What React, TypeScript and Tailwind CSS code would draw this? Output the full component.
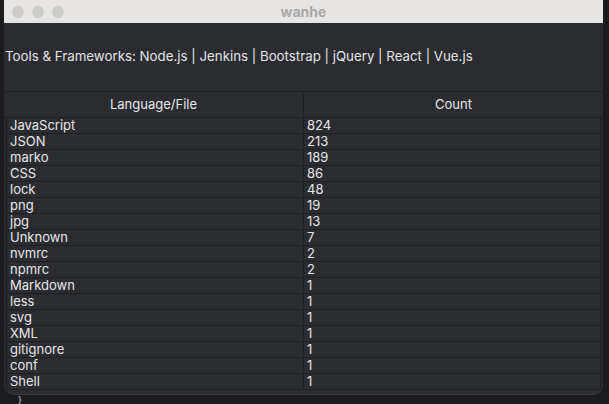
const rows: [string, number][] = [
  ['JavaScript', 824],
  ['JSON', 213],
  ['marko', 189],
  ['CSS', 86],
  ['lock', 48],
  ['png', 19],
  ['jpg', 13],
  ['Unknown', 7],
  ['nvmrc', 2],
  ['npmrc', 2],
  ['Markdown', 1],
  ['less', 1],
  ['svg', 1],
  ['XML', 1],
  ['gitignore', 1],
  ['conf', 1],
  ['Shell', 1],
];

const App = () => {
  return (
    <div
      className="w-[609px] h-[404px] bg-[#1c1c1e] overflow-hidden relative"
      style={{ fontFamily: 'Inter, "Noto Sans", sans-serif' }}
    >
      <div className="ml-[4px] w-[599px] h-[395px] bg-[#2b2c30] rounded-b-[10px] overflow-hidden flex flex-col border-b border-[#3a3b3f]">
        {/* title bar */}
        <div className="h-[23px] bg-[#e7e6e4] flex items-center relative shrink-0">
          <div className="flex gap-[8px] pl-[8px]">
            <span className="w-[12px] h-[12px] rounded-full bg-[#cdcccb]" />
            <span className="w-[12px] h-[12px] rounded-full bg-[#cdcccb]" />
            <span className="w-[12px] h-[12px] rounded-full bg-[#cdcccb]" />
          </div>
          <div className="absolute inset-0 flex items-center justify-center text-[14px] font-bold text-[#a8a8a8]">
            wanhe
          </div>
        </div>

        {/* tools line */}
        <div className="h-[68px] flex items-center pl-[1px] text-[13.3px] text-[#e4e4e6] shrink-0">
          Tools &amp; Frameworks: Node.js | Jenkins | Bootstrap | jQuery | React | Vue.js
        </div>

        {/* table */}
        <div className="border-t border-[#1f2023] text-[#e6e6e8] text-[13px]">
          <div className="flex h-[26px] items-center border-b border-[#1f2023]">
            <div className="w-[300px] text-center border-r border-[#1f2023] h-full flex items-center justify-center">
              Language/File
            </div>
            <div className="flex-1 text-center">Count</div>
          </div>
          <div className="ml-[2px] mr-[2px] border-l border-r border-[#1f2023]">
            {rows.map(([name, count]) => (
              <div key={name} className="flex h-[16px] items-center border-b border-[#1f2023] leading-none">
                <div className="w-[297px] pl-[3px] border-r border-[#1f2023] h-full flex items-center">
                  {name}
                </div>
                <div className="flex-1 pl-[3px]">{count}</div>
              </div>
            ))}
          </div>
        </div>
      </div>
      <div className="absolute left-[18px] top-[395px] text-[9px] leading-none text-[#d0d0d0]">{'}'}</div>
    </div>
  );
};

export default App;
